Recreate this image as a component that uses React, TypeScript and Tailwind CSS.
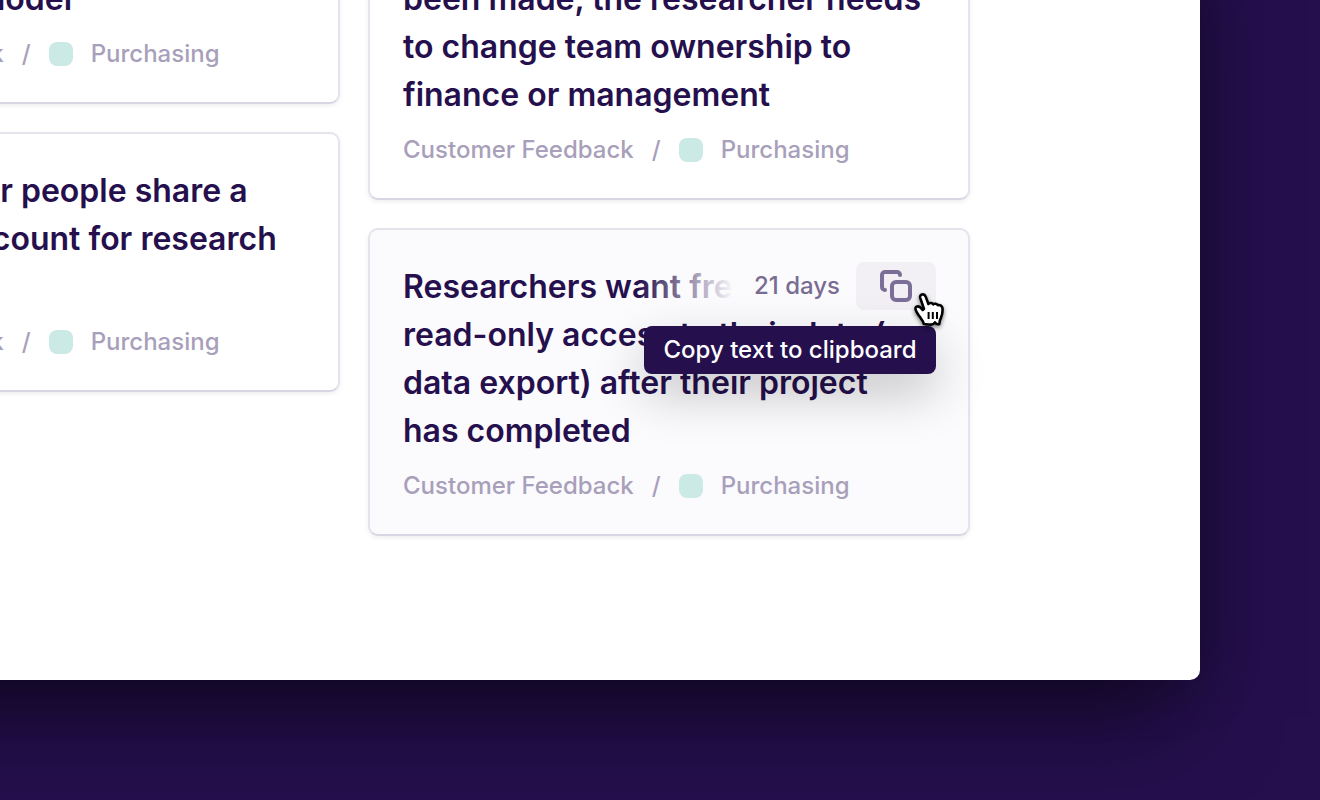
import type { ReactNode } from "react";

function CopyIcon() {
  return (
    <svg
      width="32"
      height="32"
      viewBox="0 0 32 32"
      fill="none"
      stroke="currentColor"
      strokeWidth="4"
      strokeLinecap="round"
      aria-hidden="true"
    >
      <path d="M20 5a3 3 0 0 0-3-3H5a3 3 0 0 0-3 3v12a3 3 0 0 0 3 3" />
      <rect x="12" y="12" width="18" height="18" rx="4" />
    </svg>
  );
}

function HandCursor() {
  return (
    <svg
      className="pointer-events-none absolute top-7 left-14 z-20 drop-shadow-[0_2px_2px_rgba(0,0,0,0.5)]"
      width="36"
      height="40"
      viewBox="0 0 36 40"
      aria-hidden="true"
    >
      <path
        d="M8.2 7.8C7.2 4.2 12.2 3 13.6 6.4L16.4 14C17.6 12.6 20.4 12.7 21.3 14.3C22.6 13.3 24.9 13.7 25.8 15.2C27.8 14.5 30.4 16 30.5 18.4C30.7 21.3 30.4 24.6 29 27.6C27.9 29.8 27.4 31.5 27.3 34C25.4 34.7 24 33.8 23 32.4C21.4 34.6 19.2 34.9 17.4 34.5C15.8 34.4 13.4 34.5 11.8 33.9C11 30 7.4 27 5 22.6C3.7 20.2 2.4 18.2 4.2 16.8C6.3 15.6 9 17.6 10.7 20L12 18.8Z"
        fill="white"
        stroke="black"
        strokeWidth="2.6"
        strokeLinejoin="round"
      />
      <path
        d="M16.6 22v7M20.8 22v7M25 22v7"
        stroke="black"
        strokeWidth="2"
        fill="none"
      />
    </svg>
  );
}

type CardProps = {
  title: string;
  active?: boolean;
  children?: ReactNode;
};

function Card({ title, active = false, children }: CardProps) {
  return (
    <article
      className={`relative rounded-[10px] border-2 border-[#e5e3eb] border-b-[#d9d6e3] pt-[33px] pr-8 pb-8 pl-[33px] shadow-[0_2px_4px_rgba(37,16,77,0.07)] ${
        active ? "bg-[#fbfafd]" : "bg-white"
      }`}
    >
      <h2 className="text-[32px] leading-[48px] font-semibold text-[#25104d]">{title}</h2>
      <p className="mt-[15px] flex items-center gap-[18px] text-2xl leading-8 font-medium text-[#a8a0ba]">
        <span>Customer Feedback</span>
        <span>/</span>
        <span className="size-6 rounded-lg bg-[#cbeae6]" />
        <span>Purchasing</span>
      </p>
      {children}
    </article>
  );
}

function CardActions() {
  return (
    <div className="absolute top-8 right-8 flex h-12 items-center">
      <span className="h-12 w-24 bg-gradient-to-r from-[#fbfafd]/0 to-[#fbfafd]" />
      <span className="bg-[#fbfafd] pr-4 pl-5 text-2xl leading-[48px] font-medium text-[#786c93]">
        21 days
      </span>
      <div className="relative">
        <button
          type="button"
          aria-label="Copy text to clipboard"
          aria-describedby="copy-tip"
          className="flex h-12 w-20 cursor-pointer items-center justify-center rounded-lg bg-[#f2f0f5] text-[#7b6f97]"
        >
          <CopyIcon />
        </button>
        <div
          id="copy-tip"
          role="tooltip"
          className="absolute top-16 right-0 z-10 min-w-[292px] rounded-lg bg-[#25104d] px-4 text-center text-2xl leading-[48px] font-medium whitespace-nowrap text-white shadow-[0_20px_50px_rgba(0,0,0,0.22)]"
        >
          Copy text to clipboard
        </div>
        <HandCursor />
      </div>
    </div>
  );
}

export default function App() {
  return (
    <div className="flex h-screen flex-col justify-end overflow-hidden bg-[#250f4d] pr-[120px] pb-[120px] font-['Inter',sans-serif]">
      <main className="-ml-96 rounded-br-[10px] bg-white pr-[230px] pb-36 pl-[122px] shadow-[0_60px_90px_-24px_rgba(0,0,0,0.5),0_0_60px_rgba(0,0,0,0.28)]">
        <div className="grid grid-cols-2 items-start gap-7">
          <div className="flex flex-col gap-7">
            <Card title={"Researchers do not understand our\u00a0payment\u00a0model"} />
            <Card title="Several units or people share a purchasing account for research projects" />
          </div>
          <div className="flex flex-col gap-7">
            <Card title="Once the first large purchase has been made, the researcher needs to change team ownership to finance or management" />
            <Card
              active
              title={"Researchers want free, ongoing read-only access to their data (or data export) after their project has\u00a0completed"}
            >
              <CardActions />
            </Card>
          </div>
        </div>
      </main>
    </div>
  );
}
